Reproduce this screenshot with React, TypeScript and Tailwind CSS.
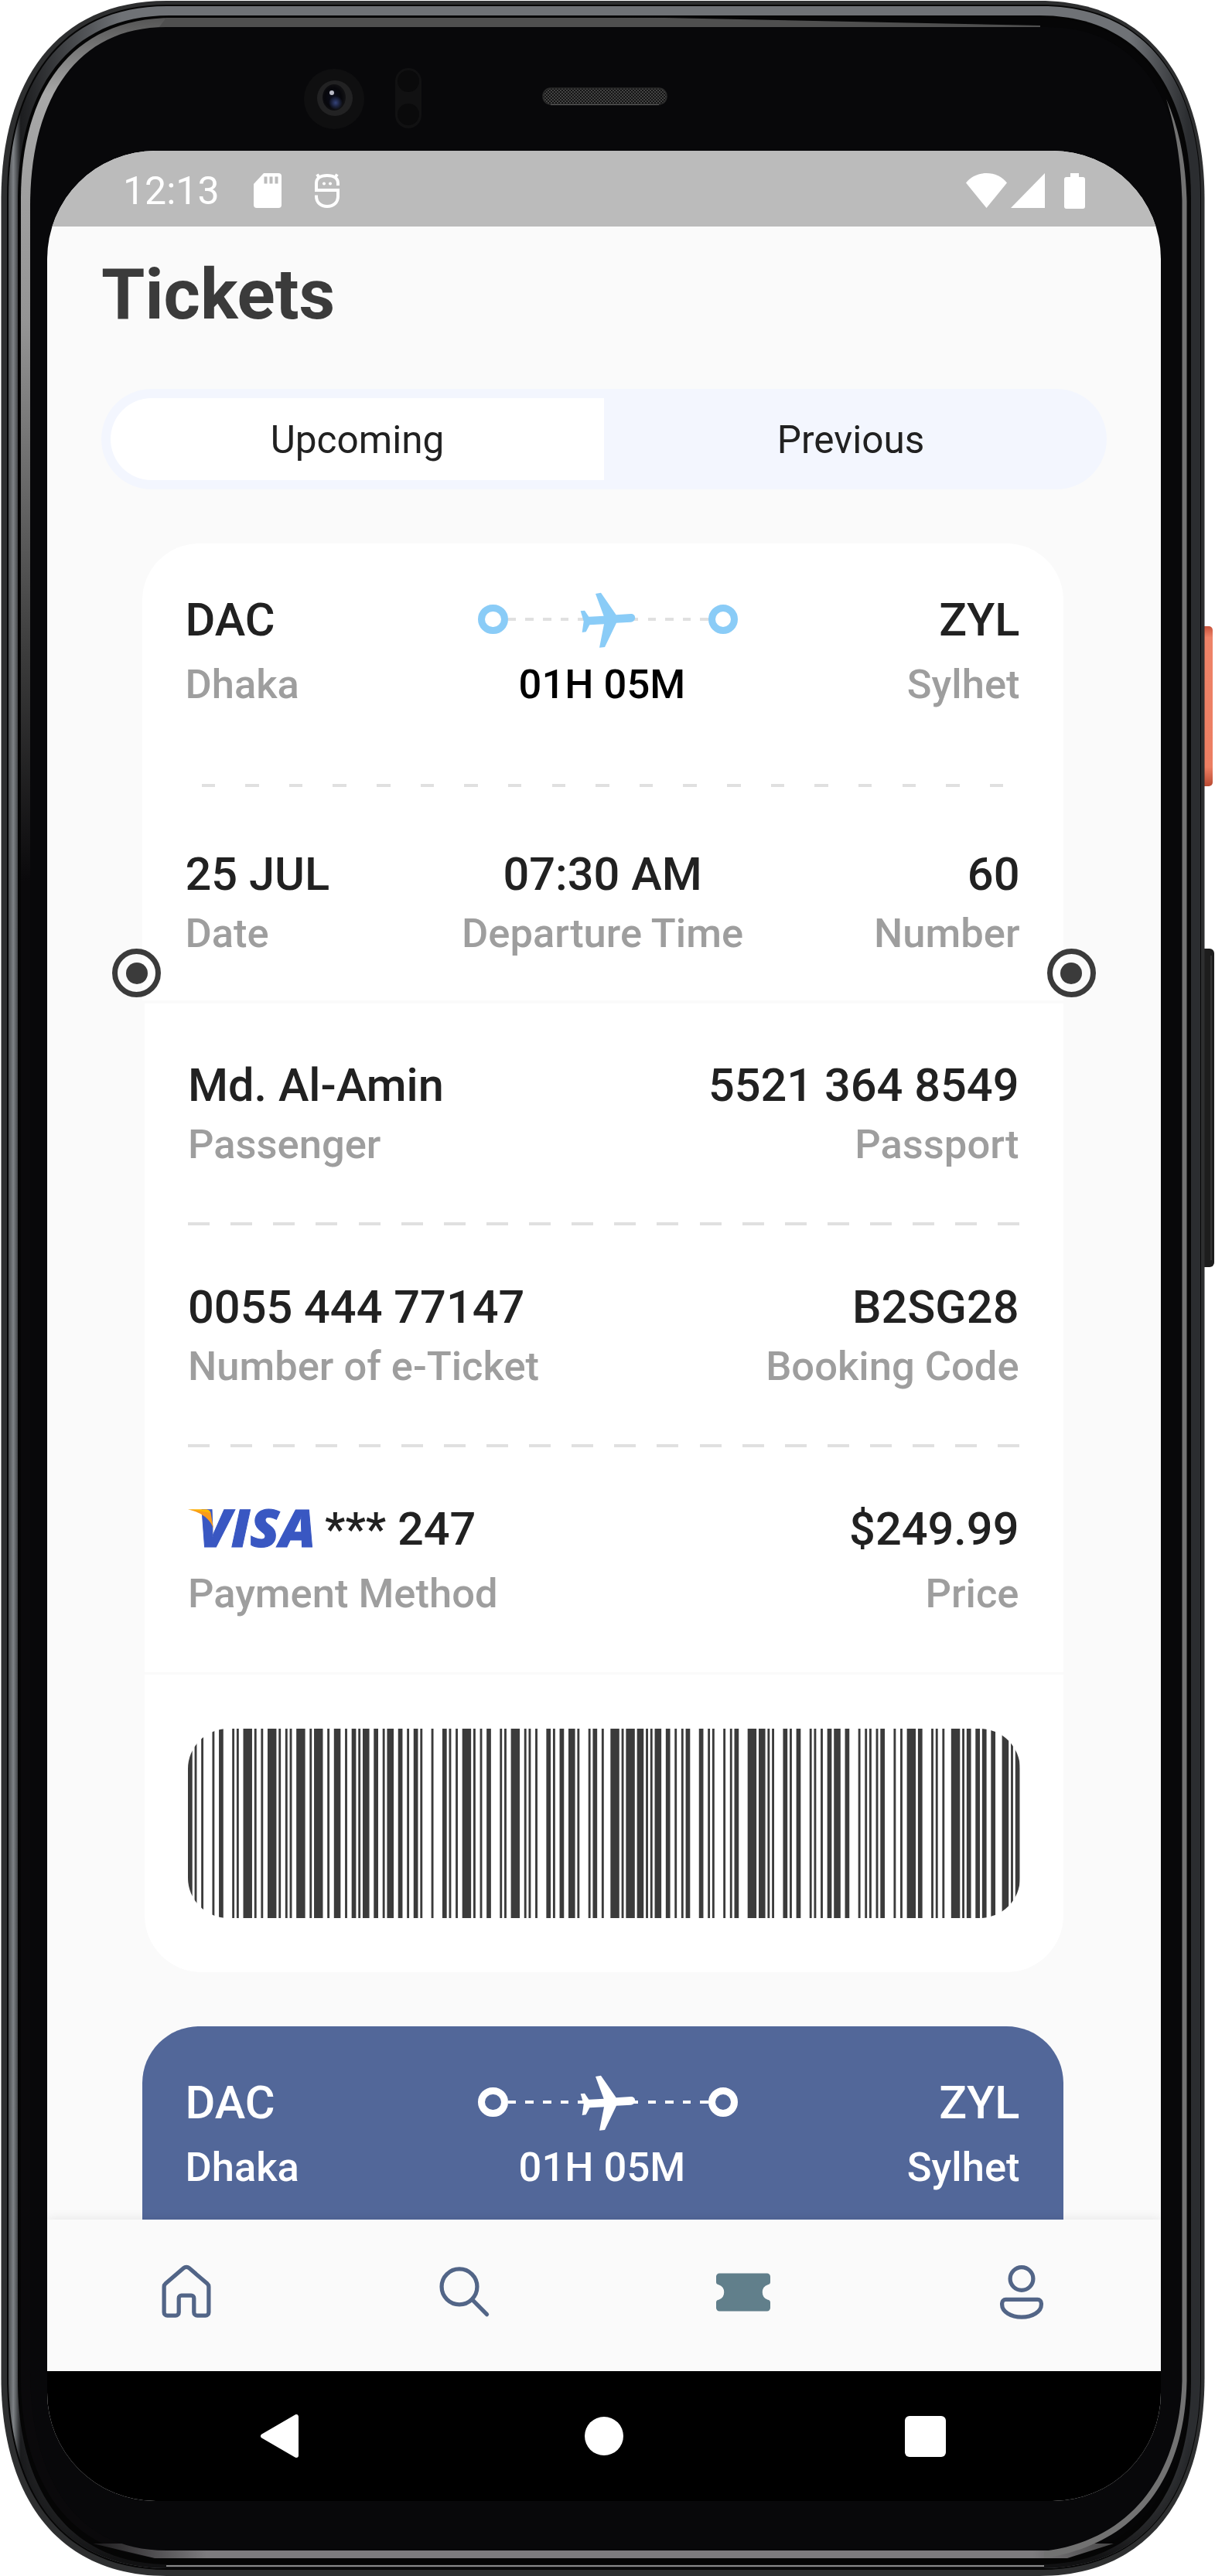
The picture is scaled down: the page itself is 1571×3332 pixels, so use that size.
import React from "react";

/* Bar start / end pairs, measured in barcode modules. */
const BARS: [number, number][] = [
  [0, 2], [3, 4], [6, 7], [11, 12], [14, 16], [20, 21], [22, 23], [25, 29], [30, 31], [33, 34],
  [36, 40], [41, 42], [44, 45], [46, 47], [49, 53], [55, 56], [57, 61], [63, 64], [66, 69], [71, 72],
  [74, 76], [77, 78], [79, 82], [84, 86], [88, 89], [90, 93], [95, 97], [99, 100], [102, 104], [105, 106],
  [110, 111], [115, 117], [118, 119], [121, 122], [124, 128], [129, 130], [132, 133], [135, 137], [141, 142],
  [143, 144], [146, 150], [152, 153], [154, 155], [157, 158], [162, 164], [165, 166], [168, 170], [172, 175],
  [176, 177], [181, 182], [183, 185], [187, 188], [191, 195], [196, 197], [198, 202], [203, 206], [207, 208],
  [209, 210], [211, 214], [216, 218], [220, 221], [223, 224], [225, 227], [231, 233], [235, 236], [237, 238],
  [242, 243], [245, 246], [247, 249], [253, 257], [258, 261], [262, 263], [264, 265], [269, 271], [272, 273],
  [275, 277], [281, 282], [283, 284], [286, 287], [289, 291], [292, 295], [297, 299], [303, 304], [306, 307],
  [308, 309], [311, 312], [313, 315], [319, 320], [322, 323], [325, 329], [330, 332], [336, 337], [338, 339],
  [341, 342], [345, 349], [350, 351], [352, 354], [356, 358], [359, 361], [363, 365], [368, 371], [372, 373],
  [374, 376],
];

function Barcode() {
  return (
    <div className="h-[245px] w-full overflow-hidden rounded-[52px]">
      <svg viewBox="0 0 376 1" preserveAspectRatio="none" className="block h-full w-full" fill="#3b3b3b">
        {BARS.map(([a, b]) => (
          <rect key={a} x={a} y={0} width={b - a} height={1} />
        ))}
      </svg>
    </div>
  );
}

/* Outline of a rounded body with long, soft corners. */
function body(l: number, t: number, r: number, b: number, rx: number, ry: number) {
  const kx = rx * 0.32;
  const ky = ry * 0.42;
  return (
    `M${l} ${t + ry}C${l} ${t + ky} ${l + kx} ${t} ${l + rx} ${t}H${r - rx}` +
    `C${r - kx} ${t} ${r} ${t + ky} ${r} ${t + ry}V${b - ry}` +
    `C${r} ${b - ky} ${r - kx} ${b} ${r - rx} ${b}H${l + rx}` +
    `C${l + kx} ${b} ${l} ${b - ky} ${l} ${b - ry}Z`
  );
}

function PhoneBody() {
  return (
    <svg className="absolute inset-0 h-[3332px] w-[1571px]" viewBox="0 0 1571 3332" aria-hidden="true">
      <defs>
        <linearGradient id="metal" x1="0" y1="0" x2="1571" y2="0" gradientUnits="userSpaceOnUse">
          <stop offset="0.006" stopColor="#3c3e40" />
          <stop offset="0.011" stopColor="#7e8286" />
          <stop offset="0.017" stopColor="#1c1d1f" />
          <stop offset="0.1" stopColor="#6f7276" />
          <stop offset="0.93" stopColor="#6f7276" />
          <stop offset="0.978" stopColor="#2b2d30" />
          <stop offset="1" stopColor="#2b2d30" />
        </linearGradient>
        <linearGradient id="underside" x1="0" y1="3150" x2="0" y2="3310" gradientUnits="userSpaceOnUse">
          <stop offset="0" stopColor="#0c0c0d" stopOpacity="0" />
          <stop offset="1" stopColor="#0c0c0d" stopOpacity="0.95" />
        </linearGradient>
        <linearGradient id="glare" x1="0" y1="23" x2="0" y2="3310" gradientUnits="userSpaceOnUse">
          <stop offset="0" stopColor="#555555" />
          <stop offset="0.03" stopColor="#a8a8a8" />
          <stop offset="0.12" stopColor="#949494" />
          <stop offset="0.25" stopColor="#3c3c3c" />
          <stop offset="0.34" stopColor="#0a090b" />
        </linearGradient>
        <linearGradient id="glareFade" x1="0" y1="0" x2="1571" y2="0" gradientUnits="userSpaceOnUse">
          <stop offset="0.5" stopColor="#060607" stopOpacity="0" />
          <stop offset="0.56" stopColor="#060607" />
        </linearGradient>
        <linearGradient id="bottomRim" x1="0" y1="0" x2="1571" y2="0" gradientUnits="userSpaceOnUse">
          <stop offset="0.06" stopColor="#0a090b" />
          <stop offset="0.17" stopColor="#7d7b7e" />
          <stop offset="0.85" stopColor="#7d7b7e" />
          <stop offset="0.93" stopColor="#3a3a3a" />
        </linearGradient>
        <linearGradient id="power" x1="0" y1="810" x2="0" y2="1017" gradientUnits="userSpaceOnUse">
          <stop offset="0" stopColor="#c8543c" />
          <stop offset="0.07" stopColor="#ee8368" />
          <stop offset="0.88" stopColor="#ec7e62" />
          <stop offset="1" stopColor="#b94b33" />
        </linearGradient>
        <radialGradient id="lens" cx="0.45" cy="0.5" r="0.6">
          <stop offset="0" stopColor="#0b0d1c" />
          <stop offset="0.6" stopColor="#07070b" />
          <stop offset="1" stopColor="#151517" />
        </radialGradient>
        <radialGradient id="flare">
          <stop offset="0" stopColor="#3a4a86" stopOpacity="0.9" />
          <stop offset="1" stopColor="#3a4a86" stopOpacity="0" />
        </radialGradient>
        <pattern id="mesh" width="4" height="4" patternUnits="userSpaceOnUse">
          <rect width="4" height="4" fill="#141414" />
          <circle cx="1" cy="1" r="0.9" fill="#5a5a5a" />
          <circle cx="3" cy="3" r="0.9" fill="#5a5a5a" />
        </pattern>
      </defs>

      {/* side keys */}
      <rect x="1548" y="810" width="20" height="207" rx="5" fill="url(#power)" />
      <rect x="1550" y="1227" width="20" height="412" rx="6" fill="#1d1d1d" />
      <rect x="1565" y="1236" width="2" height="394" fill="#343434" />

      {/* rim */}
      <path d={body(1.5, 1, 1557.5, 3332, 214, 257)} fill="#2e2f30" />
      <path d={body(9, 6, 1553, 3324, 207, 250)} fill="#060606" />
      <path d={body(11, 8, 1552, 3322, 205, 248)} fill="url(#metal)" />
      <path d={body(11, 8, 1552, 3322, 205, 248)} fill="url(#underside)" />
      <path d={body(23, 20, 1540, 3317, 196, 238)} fill="#050505" />
      <path d={body(27, 23, 1535, 3309, 196, 234)} fill="url(#glare)" />
      <path d={body(27, 22, 1536, 3310, 196, 234)} fill="url(#glareFade)" />
      <path d="M215 23H860L1345 33V36H205Z" fill="#4f4f4f" />
      <path d="M120 3290H1440L1380 3309H200Z" fill="url(#bottomRim)" />
      <path d={body(39, 35, 1530, 3299, 176, 232)} fill="#08080a" />
      <path
        d="M1534.5 3080V260C1533 205 1524 165 1508 128C1521 170 1527 210 1528.5 260V3080C1525 3200 1465 3285 1350 3300V3309C1475 3290 1532 3200 1534.5 3080Z"
        fill="#727272"
      />
      <path d="M215 3319H1350" stroke="#8a8a8a" strokeWidth="2" />

      {/* front camera, sensors and earpiece */}
      <circle cx="432" cy="128" r="39" fill="#0f0f10" />
      <circle cx="433" cy="127" r="23" fill="#222223" />
      <ellipse cx="432" cy="126" rx="15" ry="17" fill="url(#lens)" />
      <circle cx="434" cy="133" r="9" fill="url(#flare)" />
      <circle cx="429" cy="120" r="3" fill="#b9b9c4" />
      <rect x="511" y="88" width="34" height="78" rx="17" fill="#111112" />
      <circle cx="528" cy="105" r="14" fill="#0a0a0b" />
      <circle cx="528" cy="148" r="14" fill="#0a0a0b" />
      <rect x="702" y="114" width="160" height="21" rx="10" fill="url(#mesh)" stroke="#2a2a2a" strokeWidth="1.5" />
      <path d="M712 135.5H852" stroke="#5a5a5a" strokeWidth="1.2" />
    </svg>
  );
}

function StatusBar() {
  return (
    <div className="flex h-[98px] shrink-0 items-center bg-[#bbbbbb] pl-[98px] pr-[98px] text-white">
      <span className="mt-[5px] w-[169px] text-[50px] leading-[58px]">12:13</span>
      <svg className="mt-[5px] h-[45px] w-[36px]" viewBox="0 0 36 45">
        <path d="M13 0H32a4 4 0 0 1 4 4V41a4 4 0 0 1-4 4H4a4 4 0 0 1-4-4V14Z" fill="currentColor" />
        <path d="M13.5 4.5h4v9h-4zM20.5 4.5h4v9h-4zM27.5 4.5h4v9h-4z" fill="#bbbbbb" />
      </svg>
      <svg className="ml-[43px] mt-[5px] h-[45px] w-[32px]" viewBox="0 0 32 45" fill="none" stroke="currentColor">
        <path d="M30 16V13C30 6 24 3 16 3S2 6 2 13V22H30V30C30 38 24 43 16 43S2 38 2 30V28.5" strokeWidth="4" />
        <path d="M3 1.5 6 6M29 1.5 26 6" strokeWidth="4" />
        <circle cx="12" cy="13.5" r="2" fill="currentColor" stroke="none" />
        <circle cx="20" cy="13.5" r="2" fill="currentColor" stroke="none" />
      </svg>
      <div className="ml-auto mt-[5px] flex items-center">
        <svg className="h-[45px] w-[53px]" viewBox="0 0 53 45" fill="currentColor">
          <path d="M0 12.5C6 4.5 16 0 26.5 0S47 4.5 53 12.5L26.5 45Z" />
        </svg>
        <svg className="ml-[5px] h-[45px] w-[44px]" viewBox="0 0 44 45" fill="currentColor">
          <path d="M44 0V45H0Z" />
        </svg>
        <svg className="ml-[25px] h-[46px] w-[27px]" viewBox="0 0 27 46" fill="currentColor">
          <path d="M8 0H19V5H24a3 3 0 0 1 3 3V43a3 3 0 0 1-3 3H3a3 3 0 0 1-3-3V8A3 3 0 0 1 3 5H8Z" />
        </svg>
      </div>
    </div>
  );
}

function Dashes({ count, size }: { count: number; size: string }) {
  return (
    <div className="flex w-full justify-between">
      {Array.from({ length: count }, (_, i) => (
        <span key={i} className={`h-1 bg-[#e0e0e0] ${size}`} />
      ))}
    </div>
  );
}

function FlightPath({ white = false }: { white?: boolean }) {
  const ring = white ? "border-white" : "border-[#8accf7]";
  const dash = white ? "bg-white" : "bg-[#e0e0e0]";
  return (
    <div className="relative mb-[2px] ml-[3px] flex w-[336px] items-center">
      <span className={`h-[38.5px] w-[38.5px] shrink-0 rounded-full border-[9px] ${ring}`} />
      <div className="flex flex-1 justify-between">
        {Array.from({ length: 12 }, (_, i) => (
          <span key={i} className={`h-[3.5px] w-[10.5px] ${dash}`} />
        ))}
      </div>
      <span className={`h-[38.5px] w-[38.5px] shrink-0 rounded-full border-[9px] ${ring}`} />
      <svg
        className="absolute left-[132px] top-[-16px] h-[73px] w-[72px]"
        viewBox="90 46 216 219"
        fill={white ? "#ffffff" : "#8accf7"}
      >
        <path d="M150 52 171 48 230 134 287 130C309 129 309 161 287 162L231 165 186 259 165 261 183 170 127 173 113 200 98 202 104 159 92 119 108 117 124 141 182 138Z" />
      </svg>
    </div>
  );
}

const VALUE = "text-[59.5px] leading-[70px] font-medium";
const LABEL = "text-[52.5px] leading-[62px] font-medium";

function Route({ white = false }: { white?: boolean }) {
  const value = white ? "text-white" : "text-[#212121]";
  const label = white ? "text-white" : "text-[#9e9e9e]";
  return (
    <>
      <div className={`flex items-center justify-between ${VALUE} ${value}`}>
        <span>DAC</span>
        <FlightPath white={white} />
        <span>ZYL</span>
      </div>
      <div className={`mt-[17px] flex justify-between ${LABEL} ${label}`}>
        <span>Dhaka</span>
        <span className={white ? "mr-[3px] text-white" : "mr-[3px] text-black"}>01H 05M</span>
        <span>Sylhet</span>
      </div>
    </>
  );
}

function Fact({ value, label, align }: { value: string; label: string; align: string }) {
  return (
    <div className={`flex flex-col gap-[10px] ${align}`}>
      <span className={`text-[#212121] ${VALUE}`}>{value}</span>
      <span className={`text-[#9e9e9e] ${LABEL}`}>{label}</span>
    </div>
  );
}

function Pair({ left, right, leftLabel, rightLabel, gap = "mt-[10px]" }: {
  left: React.ReactNode; right: string; leftLabel: string; rightLabel: string; gap?: string;
}) {
  return (
    <>
      <div className={`flex justify-between pr-px text-[#212121] ${VALUE}`}>
        <span className="flex items-center">{left}</span>
        <span>{right}</span>
      </div>
      <div className={`flex justify-between pr-px text-[#9e9e9e] ${LABEL} ${gap}`}>
        <span>{leftLabel}</span>
        <span>{rightLabel}</span>
      </div>
    </>
  );
}

function VisaLogo() {
  return (
    <svg className="h-[110px] w-[174px] shrink-0" viewBox="0 -20 174 110">
      <text
        x="13"
        y="58"
        fontFamily="Open Sans"
        fontWeight="800"
        fontStyle="italic"
        fontSize="67"
        textLength="152"
        lengthAdjust="spacingAndGlyphs"
        fill="#3957c2"
        stroke="#3957c2"
        strokeWidth="1"
      >
        VISA
      </text>
      <path d="M0 9.5H24Q29 10 29.5 14L33 34C29 22 18 13 0 9.5Z" fill="#f99b1c" />
      <path d="M0 9.5H24Q28 10 29 14Q16 11 0 9.5Z" fill="#fdb900" />
    </svg>
  );
}

function Punch({ side }: { side: string }) {
  return (
    <span className={`absolute top-[524px] flex h-[63px] w-[63px] items-center justify-center rounded-full border-[7px] border-[#3b3b3b] ${side}`}>
      <span className="h-7 w-7 rounded-full bg-[#3b3b3b]" />
    </span>
  );
}

function Ticket() {
  return (
    <div className="relative ml-[122.5px] mt-[70px] w-[1191px]">
      <div className="h-[591px] rounded-t-[73.5px] bg-white px-14 pt-16">
        <Route />
        <div className="mt-[98px] px-[21px]">
          <Dashes count={19} size="w-[17.5px]" />
        </div>
        <div className="mt-[78px] flex justify-between">
          <Fact value="25 JUL" label="Date" align="items-start" />
          <Fact value="07:30 AM" label="Departure Time" align="ml-[2px] items-center" />
          <Fact value="60" label="Number" align="items-end" />
        </div>
      </div>
      <div className="ml-[3.5px] mt-1 h-[864.5px] bg-white px-14 pt-[71px]">
        <Pair left="Md. Al-Amin" right="5521 364 8549" leftLabel="Passenger" rightLabel="Passport" />
        <div className="mb-[71px] mt-[70px]">
          <Dashes count={20} size="w-7" />
        </div>
        <Pair left="0055 444 77147" right="B2SG28" leftLabel="Number of e-Ticket" rightLabel="Booking Code" />
        <div className="mb-[71px] mt-[70px]">
          <Dashes count={20} size="w-7" />
        </div>
        <Pair
          left={
            <span className="flex h-[70px] items-center">
              <VisaLogo />
              <span className="ml-[3px]">*** 247</span>
            </span>
          }
          right="$249.99"
          leftLabel="Payment Method"
          rightLabel="Price"
          gap="mt-[17px]"
        />
      </div>
      <div className="ml-[3.5px] mt-[3.5px] h-[385px] rounded-b-[73.5px] bg-white px-14 pt-[70px]">
        <Barcode />
      </div>
      <Punch side="left-[-38.5px]" />
      <Punch side="right-[-42px]" />
    </div>
  );
}

function TabBar() {
  const icon = "mx-auto mt-[52px] h-[84px] w-[84px]";
  return (
    <div className="relative grid h-[196px] shrink-0 grid-cols-4 bg-[#fafafa] text-[#526587] shadow-[0_0_14px_rgba(0,0,0,0.09)]">
      <svg className={icon} viewBox="0 0 24 24" fill="none" stroke="currentColor" strokeWidth="1.5" strokeLinejoin="round">
        <path d="M13.05 3.1 19.7 8.8C20.05 9.1 20.25 9.5 20.25 9.98V19.4A1.2 1.2 0 0 1 19.05 20.6H16A1.2 1.2 0 0 1 14.8 19.4V14.2A1 1 0 0 0 13.8 13.2H10.2A1 1 0 0 0 9.2 14.2V19.4A1.2 1.2 0 0 1 8 20.6H4.95A1.2 1.2 0 0 1 3.75 19.4V9.98C3.75 9.5 3.95 9.1 4.3 8.8L10.95 3.1A1.6 1.6 0 0 1 13.05 3.1Z" />
      </svg>
      <svg className={icon} viewBox="0 0 24 24" fill="none" stroke="currentColor" strokeWidth="1.5" strokeLinecap="round">
        <circle cx="10" cy="9.95" r="6.55" />
        <path d="M14.7 14.7 20.15 20.2" />
      </svg>
      <svg className={`${icon} text-[#617f8b]`} viewBox="0 0 24 24" fill="currentColor">
        <path d="M3.2 5H20.8A1.2 1.2 0 0 1 22 6.2V8.3C22 8.8 21.6 9.15 21.1 9.2A2.95 2.95 0 0 0 21.1 14.8C21.6 14.85 22 15.2 22 15.7V17.8A1.2 1.2 0 0 1 20.8 19H3.2A1.2 1.2 0 0 1 2 17.8V15.7C2 15.2 2.4 14.85 2.9 14.8A2.95 2.95 0 0 0 2.9 9.2C2.4 9.15 2 8.8 2 8.3V6.2A1.2 1.2 0 0 1 3.2 5Z" />
      </svg>
      <svg className={icon} viewBox="0 0 24 24" fill="none" stroke="currentColor" strokeWidth="1.5">
        <circle cx="12" cy="7" r="4.25" />
        <path d="M6.1 14.7H17.9A1.35 1.35 0 0 1 19.25 16.05V16.6C19.25 19.2 16 21.2 12 21.2S4.75 19.2 4.75 16.6V16.05A1.35 1.35 0 0 1 6.1 14.7Z" />
      </svg>
    </div>
  );
}

function SystemNav() {
  return (
    <div className="flex h-[168px] shrink-0 items-center bg-black pl-[276px] text-white">
      <svg className="h-[56px] w-[49px]" viewBox="0 0 49 56" fill="currentColor" stroke="currentColor" strokeWidth="6" strokeLinejoin="round">
        <path d="M3 28 46 3V53Z" />
      </svg>
      <span className="ml-[370px] h-[50px] w-[50px] rounded-full bg-white" />
      <span className="ml-[363.5px] h-[53px] w-[53px] rounded-[6px] bg-white" />
    </div>
  );
}

export default function App() {
  return (
    <div className="relative h-[3332px] w-[1571px] overflow-hidden bg-white pl-[61px] pt-[195px] font-['Roboto',sans-serif]">
      <PhoneBody />
      <div className="relative flex h-[3040px] w-[1440px] flex-col overflow-hidden rounded-[140px] bg-[#fafafa]">
        <StatusBar />
        <main className="h-[2578px] shrink-0 overflow-hidden">
          <h1 className="ml-[70px] mt-[35px] text-[91px] font-bold leading-[107px] text-[#3b3b3b]">Tickets</h1>
          <div className="mx-[70px] mt-[68px] grid h-[130px] grid-cols-2 rounded-[65px] bg-[#f3f6fe] p-3 text-center text-[49.5px] leading-[108px] text-[#212121]">
            <span className="h-[106px] rounded-l-[53px] bg-white">Upcoming</span>
            <span className="h-[106px]">Previous</span>
          </div>
          <Ticket />
          <div className="ml-[122.5px] mt-[70px] h-[600px] w-[1191px] rounded-t-[73.5px] bg-[#526799] px-14 pt-16">
            <Route white />
          </div>
        </main>
        <TabBar />
        <SystemNav />
      </div>
    </div>
  );
}
